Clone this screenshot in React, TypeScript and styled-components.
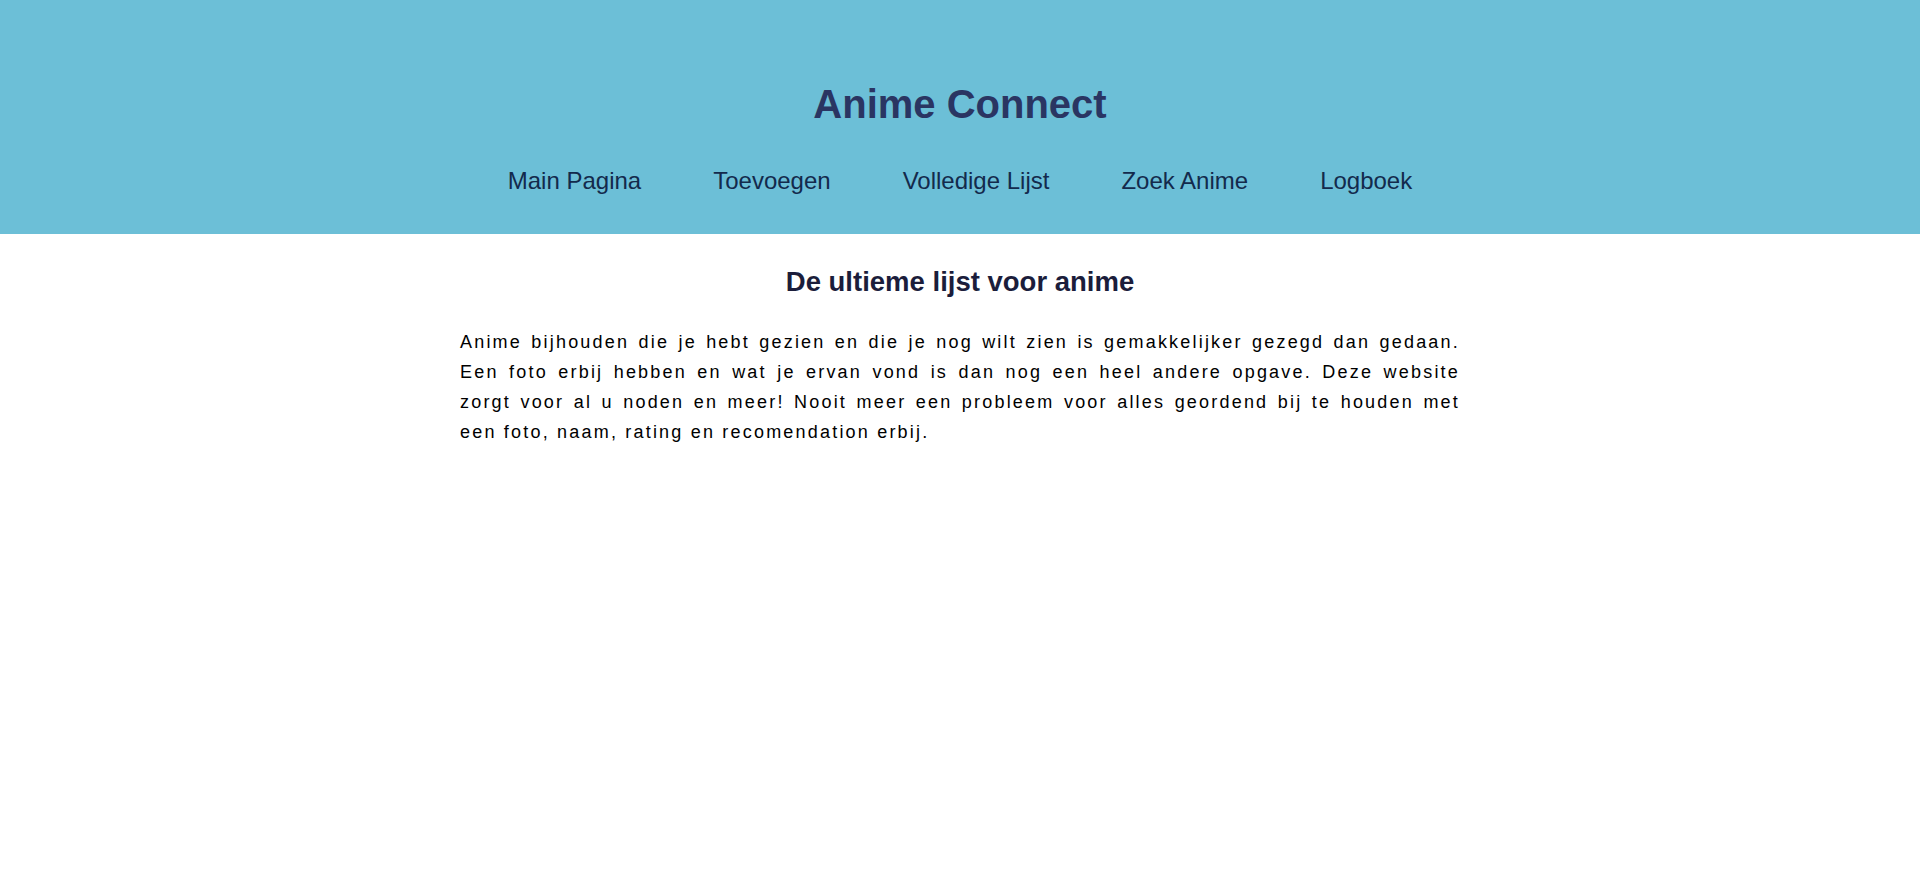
import React from "react";
import styled, { createGlobalStyle } from "styled-components";

const GlobalStyle = createGlobalStyle`
  html, body {
    margin: 0;
    padding: 0;
    background: #ffffff;
    font-family: "Liberation Sans", Arial, sans-serif;
  }
`;

const Header = styled.header`
  background: #6cbfd7;
  padding: 81px 0 39px;
  display: flex;
  flex-direction: column;
  align-items: center;
`;

const Title = styled.h1`
  margin: 0;
  font-size: 40px;
  line-height: 46px;
  font-weight: 700;
  color: #2a3562;
`;

const Nav = styled.nav`
  margin-top: 40px;
  display: flex;
  justify-content: center;
  gap: 72px;
`;

const NavLink = styled.a`
  font-size: 24px;
  line-height: 28px;
  color: #132a4c;
  text-decoration: none;
  cursor: pointer;
`;

const Main = styled.main`
  padding-top: 32px;
  display: flex;
  flex-direction: column;
  align-items: center;
`;

const Heading = styled.h2`
  margin: 0;
  font-size: 27.5px;
  line-height: 31px;
  font-weight: 700;
  color: #1b1d3b;
`;

const Paragraph = styled.p`
  margin: 30px 0 0;
  width: 1000px;
  font-size: 18px;
  line-height: 30px;
  letter-spacing: 2.2px;
  text-align: justify;
  color: #000000;
`;

const links = ["Main Pagina", "Toevoegen", "Volledige Lijst", "Zoek Anime", "Logboek"];

export default function App() {
  return (
    <>
      <GlobalStyle />
      <Header>
        <Title>Anime Connect</Title>
        <Nav>
          {links.map((l) => (
            <NavLink key={l}>{l}</NavLink>
          ))}
        </Nav>
      </Header>
      <Main>
        <Heading>De ultieme lijst voor anime</Heading>
        <Paragraph>
          Anime bijhouden die je hebt gezien en die je nog wilt zien is gemakkelijker gezegd dan gedaan.
          Een foto erbij hebben en wat je ervan vond is dan nog een heel andere opgave. Deze website
          zorgt voor al u noden en meer! Nooit meer een probleem voor alles geordend bij te houden met
          een foto, naam, rating en recomendation erbij.
        </Paragraph>
      </Main>
    </>
  );
}
